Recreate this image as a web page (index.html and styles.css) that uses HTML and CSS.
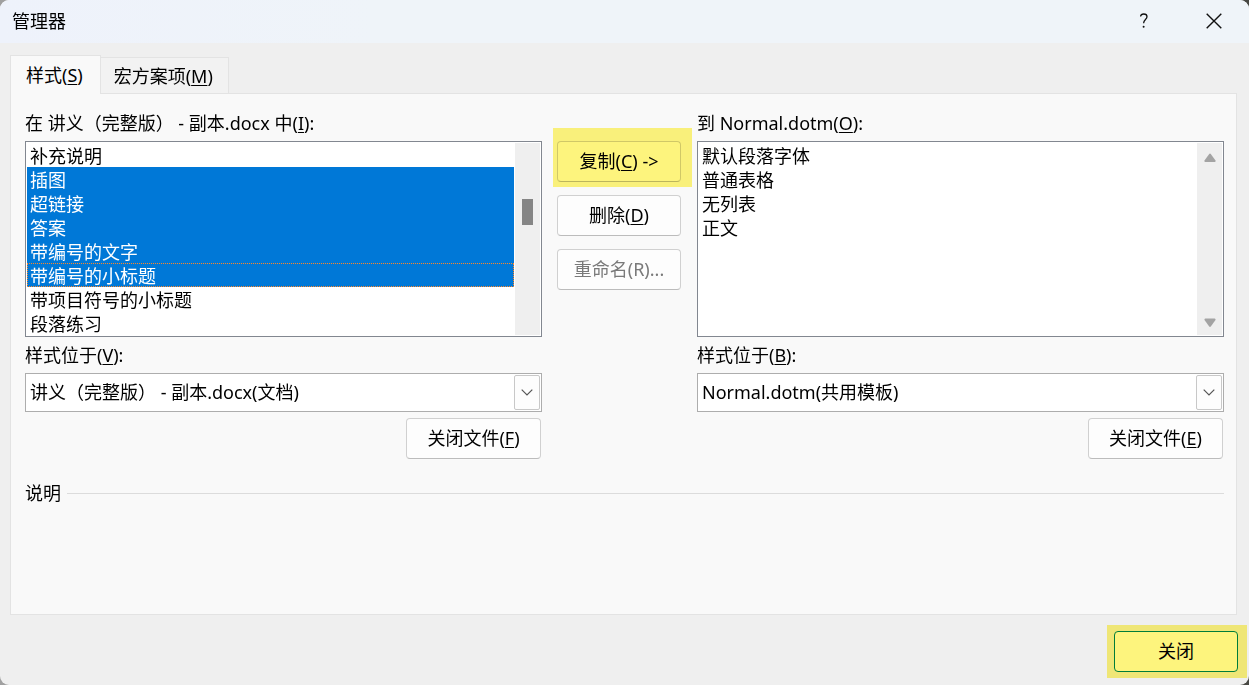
FILE: index.html
```html
<!DOCTYPE html>
<html lang="zh-CN">
<head>
<meta charset="utf-8">
<title>管理器</title>
<link rel="stylesheet" href="styles.css">
</head>
<body>
<main class="dialog">
  <header class="titlebar">
    <h1 class="title">管理器</h1>
    <button class="title-btn" type="button" aria-label="帮助"><svg width="10" height="16" viewBox="0 0 10 16"><path d="M1.5 3.5C1.8 1.8 3 1 4.7 1C6.8 1 8 2 8 3.7C8 6.4 4.6 6.7 4.6 10.2" fill="none" stroke="#111" stroke-width="1.3"/><circle cx="4.6" cy="13.8" r="1" fill="#111"/></svg></button>
    <button class="title-btn" type="button" aria-label="关闭窗口"><svg width="16" height="16" viewBox="0 0 16 16"><path d="M.7.7 15.3 15.3M15.3.7.7 15.3" stroke="#111" stroke-width="1.4"/></svg></button>
  </header>

  <div class="content">
    <div class="tabs" role="tablist">
      <button class="tab active" type="button" role="tab" aria-selected="true">样式(<u>S</u>)</button>
      <button class="tab" type="button" role="tab" aria-selected="false">宏方案项(<u>M</u>)</button>
    </div>

    <section class="panel" role="tabpanel">
      <div class="columns">
        <div class="side">
          <label class="label" for="source-list">在 讲义（完整版） - 副本.docx 中(<u>I</u>):</label>
          <div class="listbox">
            <select class="list" id="source-list" size="8" multiple>
              <option>补充说明</option>
              <option selected>插图</option>
              <option selected>超链接</option>
              <option selected>答案</option>
              <option selected>带编号的文字</option>
              <option class="current" selected>带编号的小标题</option>
              <option>带项目符号的小标题</option>
              <option>段落练习</option>
            </select>
            <div class="scrollbar"><span class="thumb"></span></div>
          </div>
          <label class="label sub" for="source-file">样式位于(<u>V</u>):</label>
          <div class="combo">
            <select class="combo-select" id="source-file"><option>讲义（完整版） - 副本.docx(文档)</option></select>
            <span class="combo-arrow"><svg width="12" height="7" viewBox="0 0 12 7"><path d="M.7.7 6 6 11.3.7" fill="none" stroke="#555" stroke-width="1.2"/></svg></span>
          </div>
          <button class="btn file-btn" type="button">关闭文件(<u>F</u>)</button>
        </div>

        <div class="actions">
          <div class="mark mark-copy"><button class="btn" type="button">复制(<u>C</u>) -&gt;</button></div>
          <button class="btn" type="button">删除(<u>D</u>)</button>
          <button class="btn" type="button" disabled>重命名(R)...</button>
        </div>

        <div class="side">
          <label class="label" for="target-list">到 Normal.dotm(<u>O</u>):</label>
          <div class="listbox">
            <select class="list" id="target-list" size="8" multiple>
              <option>默认段落字体</option>
              <option>普通表格</option>
              <option>无列表</option>
              <option>正文</option>
            </select>
            <div class="scrollbar ends">
              <svg width="12" height="10" viewBox="0 0 12 10"><path d="M5.2.9Q6 .1 6.8.9L11.5 7.5Q12 9 10.6 9H1.4Q0 9 .5 7.5Z" fill="#a3a3a3"/></svg>
              <svg width="12" height="10" viewBox="0 0 12 10"><path d="M5.2 8.6Q6 9.4 6.8 8.6L11.5 2Q12 .5 10.6.5H1.4Q0 .5 .5 2Z" fill="#a3a3a3"/></svg>
            </div>
          </div>
          <label class="label sub" for="target-file">样式位于(<u>B</u>):</label>
          <div class="combo">
            <select class="combo-select" id="target-file"><option>Normal.dotm(共用模板)</option></select>
            <span class="combo-arrow"><svg width="12" height="7" viewBox="0 0 12 7"><path d="M.7.7 6 6 11.3.7" fill="none" stroke="#555" stroke-width="1.2"/></svg></span>
          </div>
          <button class="btn file-btn" type="button">关闭文件(<u>E</u>)</button>
        </div>
      </div>
      <h2 class="group-title">说明</h2>
    </section>
  </div>

  <footer class="footer">
    <div class="mark mark-close"><button class="btn primary" type="button">关闭</button></div>
  </footer>
</main>
</body>
</html>
```

FILE: styles.css
```css
* {
  box-sizing: border-box;
}

body {
  margin: 0;
  background: linear-gradient(to right, #a0a0a0, #484844);
  color: #000;
  font: 18px/24px "Noto Sans", "Noto Sans CJK SC", sans-serif;
}

button,
select {
  margin: 0;
  color: inherit;
  font: inherit;
}

u {
  text-decoration-thickness: 1px;
  text-underline-offset: 2px;
}

svg {
  display: block;
}

.dialog {
  display: flex;
  flex-direction: column;
  min-height: 100vh;
  border-radius: 9px;
  background: #efefef;
  overflow: hidden;
}

.titlebar {
  display: flex;
  align-items: center;
  height: 43px;
  padding: 0 0 2px 12px;
  background: linear-gradient(to right, #eef2fb, #eff4f9 30%);
}

.title {
  flex: 1;
  margin: 0;
  font-size: 18px;
  font-weight: 400;
}

.title-btn {
  display: flex;
  align-items: center;
  justify-content: center;
  width: 70px;
  height: 41px;
  padding: 0;
  border: 0;
  background: none;
}

.content {
  display: flex;
  flex: 1;
  flex-direction: column;
  padding: 12px 12px 0 10px;
}

.tabs {
  display: flex;
  align-items: flex-end;
}

.tab {
  height: 36px;
  padding: 0 15px 0 13px;
  border: 1px solid #e3e3e3;
  border-width: 1px 1px 0 0;
  background: #f2f2f2;
}

.tab.active {
  z-index: 1;
  height: 39px;
  margin-bottom: -1px;
  padding: 0 17px 0 15px;
  border-left-width: 1px;
  background: #f9f9f9;
}

.panel {
  flex: 1;
  padding: 17px 12px 0 14px;
  border: 1px solid #e3e3e3;
  background: #f9f9f9;
}

.columns {
  display: grid;
  grid-template-columns: 517fr 125px 527fr;
  column-gap: 15px;
}

.side {
  display: flex;
  flex-direction: column;
  min-width: 0;
}

.label {
  height: 30px;
  white-space: nowrap;
}

.label.sub {
  margin-top: 6px;
}

.listbox {
  display: flex;
  padding: 1px;
  border: 1px solid #828790;
  background: #fff;
}

.list {
  flex: 1;
  min-width: 0;
  height: 192px;
  padding: 0;
  border: 0;
  outline: 0;
  background: #fff;
  overflow: hidden;
}

.list option {
  display: flex;
  align-items: center;
  height: 24px;
  min-height: 24px;
  padding: 0 3px 1px;
}

.list option:checked {
  background: #0078d7 linear-gradient(#0078d7, #0078d7);
  color: #fff;
}

.list .current {
  padding: 0 2px 1px;
  border: 1px dotted #ff8728;
}

.scrollbar {
  width: 25px;
  margin-left: 1px;
  background: #efefef;
}

.thumb {
  display: block;
  width: 11px;
  height: 26px;
  margin: 56px 0 0 7px;
  background: #858585;
}

.ends {
  display: flex;
  flex-direction: column;
  align-items: center;
  justify-content: space-between;
  padding: 10px 0 7px;
}

.combo {
  position: relative;
  display: flex;
}

.combo-select {
  flex: 1;
  min-width: 0;
  height: 39px;
  padding: 0 32px 2px 4px;
  border: 1px solid #adadad;
  border-radius: 0;
  background: #fff;
  appearance: none;
}

.combo-arrow {
  position: absolute;
  top: 2px;
  right: 2px;
  bottom: 2px;
  display: flex;
  align-items: center;
  justify-content: center;
  width: 26px;
  border: 1px solid #c8c8c8;
  border-radius: 2px;
  background: #fdfdfd;
  pointer-events: none;
}

.btn {
  width: 100%;
  height: 41px;
  padding: 0 0 2px;
  border: 1px solid #d0d0d0;
  border-bottom-color: #bcbcbc;
  border-radius: 4px;
  background: #fdfdfd;
  text-align: center;
}

.btn:disabled {
  color: #7a7a7a;
}

.file-btn {
  align-self: flex-end;
  width: 135px;
  margin: 6px 1px 0 0;
}

.actions {
  display: flex;
  flex-direction: column;
  gap: 13px;
  padding: 30px 1px 0 0;
}

.mark {
  position: relative;
  display: flex;
}

.mark::after {
  content: "";
  position: absolute;
  background: #fff67e;
  mix-blend-mode: multiply;
  pointer-events: none;
}

.mark-copy::after {
  inset: -13px -11px -5px -4px;
}

.mark-close::after {
  inset: -6px -9px -6px -7px;
}

.group-title {
  display: flex;
  align-items: center;
  gap: 6px;
  margin: 22px 0 0;
  font-size: 18px;
  font-weight: 400;
}

.group-title::after {
  content: "";
  flex: 1;
  height: 1px;
  background: #dcdcdc;
}

.footer {
  display: flex;
  justify-content: flex-end;
  padding: 16px 11px 13px;
}

.mark-close {
  width: 124px;
}

.primary {
  border-color: #008272;
}
```
